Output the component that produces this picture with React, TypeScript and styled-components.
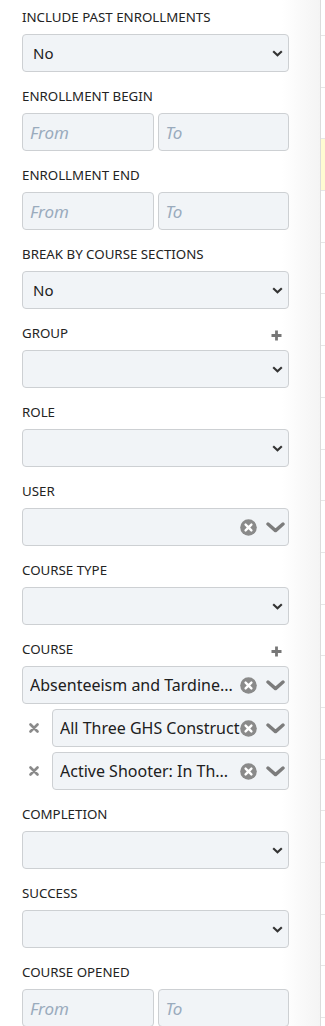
import React from "react";
import styled, { createGlobalStyle } from "styled-components";

const GlobalStyle = createGlobalStyle`
  html, body {
    margin: 0;
    padding: 0;
    background: #ffffff;
    font-family: "Noto Sans", "Open Sans", sans-serif;
  }
  * { box-sizing: border-box; }
`;

type Field =
  | { kind: "native"; label: string; value?: string; plus?: boolean }
  | { kind: "range"; label: string }
  | { kind: "custom"; label: string; plus?: boolean; values: { text: string; clip?: boolean }[] };

const fields: Field[] = [
  { kind: "native", label: "Include past enrollments", value: "No" },
  { kind: "range", label: "Enrollment begin" },
  { kind: "range", label: "Enrollment end" },
  { kind: "native", label: "Break by course sections", value: "No" },
  { kind: "native", label: "Group", plus: true },
  { kind: "native", label: "Role" },
  { kind: "custom", label: "User", values: [{ text: "" }] },
  { kind: "native", label: "Course type" },
  {
    kind: "custom",
    label: "Course",
    plus: true,
    values: [
      { text: "Absenteeism and Tardine..." },
      { text: "All Three GHS Construction Safety", clip: true },
      { text: "Active Shooter: In Th..." },
    ],
  },
  { kind: "native", label: "Completion" },
  { kind: "native", label: "Success" },
  { kind: "range", label: "Course opened" },
];

const SmallChevron = () => (
  <svg width="11" height="7" viewBox="0 0 11 7">
    <path d="M1.2 1.2 L5.5 5.3 L9.8 1.2" fill="none" stroke="#333" strokeWidth="2.1" />
  </svg>
);

const BigChevron = () => (
  <svg width="19" height="11" viewBox="0 0 19 11">
    <path d="M2 2 L9.5 8.6 L17 2" fill="none" stroke="#7c7c7c" strokeWidth="3.4" strokeLinecap="round" strokeLinejoin="round" />
  </svg>
);

const ClearCircle = () => (
  <svg width="17" height="17" viewBox="0 0 17 17">
    <circle cx="8.5" cy="8.5" r="8.3" fill="#8a8a8a" />
    <path d="M5.6 5.6 L11.4 11.4 M11.4 5.6 L5.6 11.4" stroke="#fff" strokeWidth="2.4" strokeLinecap="round" />
  </svg>
);

const PlusIcon = () => (
  <svg width="11" height="11" viewBox="0 0 11 11">
    <path d="M5.5 0.5 V10.5 M0.5 5.5 H10.5" stroke="#777" strokeWidth="2.8" />
  </svg>
);

const RemoveIcon = () => (
  <svg width="10" height="10" viewBox="0 0 10 10">
    <path d="M1.5 1.5 L8.5 8.5 M8.5 1.5 L1.5 8.5" stroke="#8a8a8a" strokeWidth="2.6" strokeLinecap="round" />
  </svg>
);

const App = () => {
  return (
    <>
      <GlobalStyle />
      <Layout>
        <Sidebar>
          {fields.map((f) => (
            <Group key={f.label}>
              <LabelRow>
                <Label>{f.label}</Label>
                {"plus" in f && f.plus && (
                  <AddButton>
                    <PlusIcon />
                  </AddButton>
                )}
              </LabelRow>
              {f.kind === "native" && (
                <SelectBox>
                  <SelectValue>{f.value}</SelectValue>
                  <SmallChevron />
                </SelectBox>
              )}
              {f.kind === "range" && (
                <RangeRow>
                  <DateInput placeholder="From" />
                  <DateInput placeholder="To" />
                </RangeRow>
              )}
              {f.kind === "custom" && (
                <Stack>
                  {f.values.map((v, i) => (
                    <ChoiceRow key={i}>
                      {i > 0 && (
                        <RemoveButton>
                          <RemoveIcon />
                        </RemoveButton>
                      )}
                      <ChoiceBox>
                        <ChoiceText $clip={v.clip}>{v.text}</ChoiceText>
                        <Icons>
                          <ClearCircle />
                          <BigChevron />
                        </Icons>
                      </ChoiceBox>
                    </ChoiceRow>
                  ))}
                </Stack>
              )}
            </Group>
          ))}
        </Sidebar>
        <Results>
          <HeaderRow />
          {Array.from({ length: 20 }).map((_, i) => (
            <ResultRow key={i} $highlight={i === 2} />
          ))}
        </Results>
      </Layout>
    </>
  );
};

const Layout = styled.div`
  display: flex;
  width: 325px;
  height: 1026px;
  overflow: hidden;
`;

const Sidebar = styled.div`
  flex: 0 0 321px;
  width: 321px;
  min-width: 0;
  overflow: hidden;
  padding: 7px 31px 0 22px;
  border-right: 1px solid #dcdcdc;
  background: linear-gradient(to right, #ffffff 0, #ffffff 282px, #f4f4f4 320px);
`;

const Group = styled.div`
  margin-bottom: 14px;
`;

const LabelRow = styled.div`
  display: flex;
  align-items: center;
  justify-content: space-between;
  height: 20px;
  margin-bottom: 7px;
`;

const Label = styled.div`
  font-size: 13.3px;
  line-height: 20px;
  color: #232323;
  text-transform: uppercase;
`;

const AddButton = styled.span`
  display: flex;
  margin: 5px 7px 0 0;
`;

const fieldBase = `
  height: 38px;
  background: #f1f4f7;
  border: 1px solid #cdd0d3;
  border-radius: 4px;
`;

const SelectBox = styled.div`
  ${fieldBase}
  display: flex;
  align-items: center;
  justify-content: space-between;
  padding: 0 5px 0 10px;
`;

const SelectValue = styled.span`
  font-size: 15px;
  color: #202020;
`;

const RangeRow = styled.div`
  display: grid;
  grid-template-columns: minmax(0, 1fr) minmax(0, 1fr);
  gap: 4px;
`;

const DateInput = styled.input`
  ${fieldBase}
  width: 100%;
  min-width: 0;
  padding: 0 7px;
  font-family: "Noto Sans", "Open Sans", sans-serif;
  font-size: 17px;
  outline: none;
  &::placeholder {
    color: #9aabbd;
    font-style: italic;
  }
`;

const Stack = styled.div`
  display: flex;
  flex-direction: column;
  gap: 5px;
`;

const ChoiceRow = styled.div`
  display: flex;
  align-items: center;
  min-width: 0;
`;

const RemoveButton = styled.span`
  flex: 0 0 30px;
  display: flex;
  padding-left: 7px;
`;

const ChoiceBox = styled.div`
  ${fieldBase}
  flex: 1;
  min-width: 0;
  display: flex;
  align-items: center;
  padding: 0 3px 0 7px;
`;

const ChoiceText = styled.span<{ $clip?: boolean }>`
  flex: 1;
  min-width: 0;
  font-size: 16px;
  color: #202020;
  white-space: nowrap;
  overflow: hidden;
  text-overflow: ${(p) => (p.$clip ? "clip" : "ellipsis")};
`;

const Icons = styled.span`
  display: flex;
  align-items: center;
  gap: 9px;
`;

const Results = styled.div`
  flex: 1;
  min-width: 0;
  background: #ffffff;
`;

const HeaderRow = styled.div`
  height: 36px;
  border-bottom: 1px solid #e6e6e6;
`;

const ResultRow = styled.div<{ $highlight?: boolean }>`
  height: 51.7px;
  border-bottom: 1px solid #e6e6e6;
  background: ${(p) => (p.$highlight ? "#fffbd2" : "#ffffff")};
`;

export default App;
